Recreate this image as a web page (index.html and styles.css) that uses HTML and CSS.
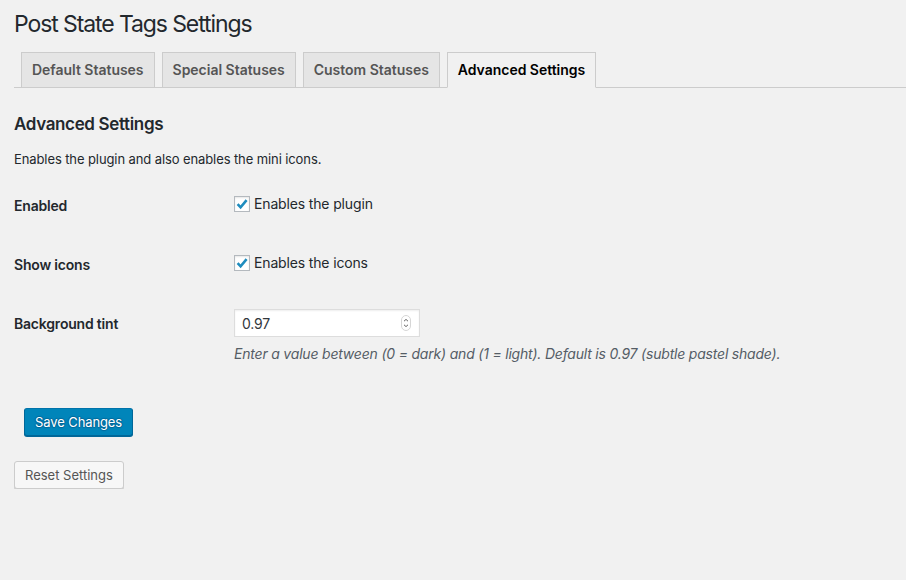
FILE: index.html
```html
<!DOCTYPE html>
<html lang="en">
<head>
<meta charset="utf-8">
<title>Post State Tags Settings</title>
<link rel="stylesheet" href="styles.css">
</head>
<body>
<div class="wrap">
  <h1 class="title">Post State Tags Settings</h1>
  <nav class="tabs">
    <a class="tab">Default Statuses</a>
    <a class="tab">Special Statuses</a>
    <a class="tab">Custom Statuses</a>
    <a class="tab active">Advanced Settings</a>
  </nav>
  <h2 class="section-title">Advanced Settings</h2>
  <p class="section-desc">Enables the plugin and also enables the mini icons.</p>
  <div class="form">
    <div class="row">
      <div class="label">Enabled</div>
      <div class="field">
        <label class="check"><span class="box"><svg viewBox="0 0 16 16" width="16" height="16"><path d="M3.6 8.2 L6.6 11.3 L12.6 4.2" fill="none" stroke="#1e8cbe" stroke-width="2.6" stroke-linecap="butt" stroke-linejoin="miter"/></svg></span>Enables the plugin</label>
      </div>
    </div>
    <div class="row">
      <div class="label">Show icons</div>
      <div class="field">
        <label class="check"><span class="box"><svg viewBox="0 0 16 16" width="16" height="16"><path d="M3.6 8.2 L6.6 11.3 L12.6 4.2" fill="none" stroke="#1e8cbe" stroke-width="2.6" stroke-linecap="butt" stroke-linejoin="miter"/></svg></span>Enables the icons</label>
      </div>
    </div>
    <div class="row row-input">
      <div class="label">Background tint</div>
      <div class="field">
        <div class="number">
          <span class="number-value">0.97</span>
          <span class="spin"><svg viewBox="0 0 10 16" width="10" height="16"><rect x="0.5" y="0.5" width="9" height="15" rx="4.5" fill="#fff" stroke="#d6d6d6"/><path d="M3 6.2 L5 4.4 L7 6.2 M3 9.8 L5 11.6 L7 9.8" fill="none" stroke="#666" stroke-width="1"/></svg></span>
        </div>
        <p class="hint">Enter a value between (0 = dark) and (1 = light). Default is 0.97 (subtle pastel shade).</p>
      </div>
    </div>
  </div>
  <div class="actions">
    <button class="btn primary" type="button">Save Changes</button>
  </div>
  <div class="actions reset">
    <button class="btn secondary" type="button">Reset Settings</button>
  </div>
</div>
</body>
</html>
```

FILE: styles.css
```css
html, body {
  margin: 0;
  padding: 0;
  background: #f1f1f1;
}
body {
  font-family: "Inter", "Noto Sans", sans-serif;
  color: #23282d;
  font-size: 13px;
}
.wrap {
  padding: 0 0 0 14px;
}
.title {
  margin: 0;
  padding: 9px 0 4px;
  font-size: 23px;
  font-weight: 400;
  line-height: 30px;
  letter-spacing: -1.1px;
  color: #23282d;
}
.tabs {
  display: flex;
  gap: 7px;
  margin-top: 9px;
  padding-left: 7px;
  border-bottom: 1px solid #ccc;
}
.tab {
  display: block;
  padding: 5px 10px;
  border: 1px solid #ccc;
  border-bottom: none;
  background: #e5e5e5;
  color: #555;
  font-size: 14px;
  font-weight: 600;
  line-height: 24px;
  letter-spacing: -0.02px;
  white-space: nowrap;
}
.tab.active {
  background: #f1f1f1;
  color: #000;
  margin-bottom: -1px;
  border-bottom: 1px solid #f1f1f1;
}
.section-title {
  margin: 25px 0 0;
  font-size: 17px;
  font-weight: 600;
  line-height: 22px;
  letter-spacing: -0.35px;
  color: #23282d;
}
.section-desc {
  margin: 14px 0 0;
  font-size: 13px;
  line-height: 20px;
  letter-spacing: -0.1px;
}
.form {
  margin-top: 1px;
}
.row {
  display: flex;
  height: 59px;
}
.label {
  width: 220px;
  flex: none;
  font-size: 14px;
  font-weight: 600;
  line-height: 20px;
  letter-spacing: -0.2px;
  padding-top: 26px;
  color: #23282d;
}
.field {
  padding-top: 24px;
  font-size: 14px;
  letter-spacing: -0.15px;
}
.check {
  display: flex;
  align-items: center;
  gap: 4px;
  line-height: 20px;
}
.box {
  width: 16px;
  height: 16px;
  box-sizing: border-box;
  border: 1px solid #b4b9be;
  background: #fff;
  box-shadow: inset 0 1px 2px rgba(0,0,0,0.1);
  display: flex;
  align-items: center;
  justify-content: center;
  overflow: hidden;
}
.box svg {
  flex: none;
}
.row-input {
  height: auto;
}
.row-input .label {
  padding-top: 26px;
}
.row-input .field {
  padding-top: 21px;
}
.number {
  width: 186px;
  height: 28px;
  box-sizing: border-box;
  border: 1px solid #ddd;
  background: #fff;
  box-shadow: inset 0 1px 2px rgba(0,0,0,0.07);
  display: flex;
  align-items: center;
  justify-content: space-between;
  padding: 0 8px 0 7px;
  font-size: 14px;
  color: #32373c;
}
.spin {
  display: flex;
}
.hint {
  margin: 7px 0 0;
  font-size: 14px;
  font-style: italic;
  line-height: 20px;
  letter-spacing: -0.2px;
  color: #555d66;
}
.actions {
  margin-top: 44px;
  padding-left: 10px;
}
.actions.reset {
  margin-top: 25px;
  padding-left: 0;
}
.btn {
  font-family: inherit;
  font-size: 13px;
  line-height: 26px;
  height: 28px;
  padding: 0 10px;
  border-radius: 3px;
  border: 1px solid;
  cursor: pointer;
  box-sizing: border-box;
}
.primary {
  background: #0085ba;
  border-color: #0073aa #006799 #006799;
  box-shadow: 0 1px 0 #006799;
  color: #fff;
  letter-spacing: -0.1px;
  text-shadow: 0 -1px 1px #006799, 1px 0 1px #006799, 0 1px 1px #006799, -1px 0 1px #006799;
}
.secondary {
  background: #f7f7f7;
  border-color: #ccc;
  box-shadow: 0 1px 0 #ccc;
  color: #555;
}
```
